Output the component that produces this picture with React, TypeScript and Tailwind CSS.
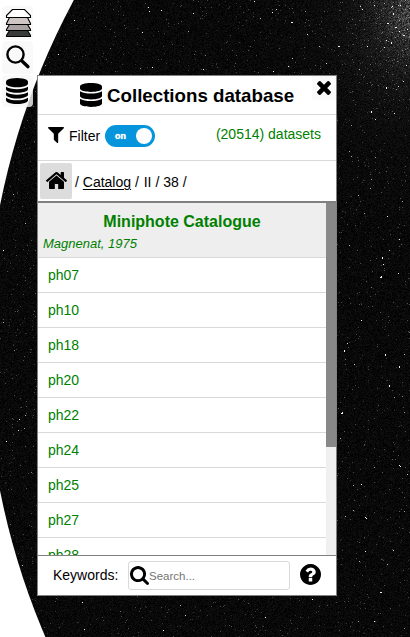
import React, { useLayoutEffect, useRef } from "react";

const rows = ["ph07", "ph10", "ph18", "ph20", "ph22", "ph24", "ph25", "ph27", "ph28"];

const brightStars = [
  [148, 7], [149, 11], [161, 10], [193, 13], [142, 32], [291, 22], [292, 22], [254, 1], [272, 12], [338, 46], [339, 46],
  [367, 46], [386, 40], [391, 42], [391, 43], [403, 35], [404, 35], [387, 23], [388, 23], [395, 27], [396, 27], [374, 5],
  [362, 9], [392, 6], [393, 13], [393, 14], [273, 71], [288, 66], [203, 69], [152, 67], [382, 257], [382, 258], [383, 264],
  [380, 277], [381, 277], [381, 276], [398, 273], [361, 320], [344, 350], [344, 351], [385, 354], [385, 355], [399, 366],
  [399, 367], [389, 385], [389, 386], [342, 412], [341, 413], [342, 413], [399, 465], [400, 466], [361, 484], [365, 517],
  [366, 518], [365, 551], [380, 592], [381, 592], [312, 599], [265, 617], [82, 602], [84, 629], [163, 630], [3, 250],
  [6, 441], [19, 419], [399, 239], [386, 87], [386, 88], [371, 111], [371, 112], [394, 113], [406, 65], [58, 54],
];

const WIDTH = 410;
const HEIGHT = 637;

// Film grain that brightens towards the star cloud in the top right corner.
function paintSky(context: CanvasRenderingContext2D) {
  let state = 12345;
  const next = () => {
    state ^= state << 13;
    state ^= state >>> 17;
    state ^= state << 5;
    return (state >>> 0) / 4294967296;
  };
  const image = context.createImageData(WIDTH, HEIGHT);
  for (let y = 0; y < HEIGHT; y++) {
    for (let x = 0; x < WIDTH; x++) {
      const distance = Math.hypot((WIDTH - x) * 1.15, Math.abs(y - 15) * 0.8);
      const cloud = Math.exp(-distance / 34);
      const noise = next();
      let value = noise * 17 + cloud * (20 + 95 * next());
      const spark = next();
      if (spark < 0.012 + cloud * 0.07) value += 25 + next() * 55;
      if (spark < 0.0007 + cloud * 0.007) value += 70 + next() * 80;
      const i = (y * WIDTH + x) * 4;
      image.data[i] = image.data[i + 1] = image.data[i + 2] = Math.min(255, value);
      image.data[i + 3] = 255;
    }
  }
  context.putImageData(image, 0, 0);
  context.fillStyle = "#f0f0f0";
  brightStars.forEach(([x, y]) => context.fillRect(x, y, 1, 1));
}

function Sky() {
  const canvas = useRef<HTMLCanvasElement>(null);
  useLayoutEffect(() => {
    const context = canvas.current?.getContext("2d");
    if (context) paintSky(context);
  }, []);
  return <canvas ref={canvas} width={WIDTH} height={HEIGHT} className="absolute inset-0 [clip-path:circle(733px_at_719px_348px)]" aria-hidden="true" />;
}

type IconProps = { box: string; d: string; className: string };
function Icon({ box, d, className }: IconProps) {
  return <svg viewBox={box} className={className} fill="currentColor" preserveAspectRatio="none" aria-hidden="true"><path d={d} /></svg>;
}

const databasePath = "M768 768q237 0 443-43t325-127v170q0 69-103 128t-280 93.500-385 34.500-385-34.500-280-93.500-103-128v-170q119 84 325 127t443 43zm0 768q237 0 443-43t325-127v170q0 69-103 128t-280 93.500-385 34.500-385-34.500-280-93.500-103-128v-170q119 84 325 127t443 43zm0-384q237 0 443-43t325-127v170q0 69-103 128t-280 93.500-385 34.500-385-34.500-280-93.500-103-128v-170q119 84 325 127t443 43zm0-1152q208 0 385 34.500t280 93.500 103 128v128q0 69-103 128t-280 93.500-385 34.500-385-34.500-280-93.500-103-128v-128q0-69 103-128t280-93.500 385-34.500z";
const database3Path = "M448 73.143v45.714C448 159.143 347.667 192 224 192S0 159.143 0 118.857V73.143C0 32.857 100.333 0 224 0s224 32.857 224 73.143zM448 176v102.857C448 319.143 347.667 352 224 352S0 319.143 0 278.857V176c48.125 33.143 136.208 48.572 224 48.572S399.874 209.143 448 176zm0 160v102.857C448 479.143 347.667 512 224 512S0 479.143 0 438.857V336c48.125 33.143 136.208 48.572 224 48.572S399.874 369.143 448 336z";
const filterPath = "M1595 295q17 41-14 70l-493 493v742q0 42-39 59-13 5-25 5-27 0-45-19l-256-256q-19-19-19-45v-486l-493-493q-31-29-14-70 17-39 59-39h1280q42 0 59 39z";
const homePath = "M1408 992v480q0 26-19 45t-45 19h-384v-384h-256v384h-384q-26 0-45-19t-19-45v-480q0-1 .5-3t.5-3l575-474 575 474q1 2 1 6zm223-69l-62 74q-8 9-21 11h-3q-13 0-21-7l-692-577-692 577q-12 8-24 7-13-2-21-11l-62-74q-8-10-7-23.500t11-21.500l719-599q32-26 76-26t76 26l244 204v-195q0-14 9-23t23-9h192q14 0 23 9t9 23v408l219 182q10 8 11 21.500t-7 23.500z";
const closePath = "M1490 1322q0 40-28 68l-136 136q-28 28-68 28t-68-28l-294-294-294 294q-28 28-68 28t-68-28l-136-136q-28-28-28-68t28-68l294-294-294-294q-28-28-28-68t28-68l136-136q28-28 68-28t68 28l294 294 294-294q28-28 68-28t68 28l136 136q28 28 28 68t-28 68l-294 294 294 294q28 28 28 68z";
const searchPath = "M1152 704q0-185-131.500-316.500t-316.500-131.500-316.500 131.500-131.500 316.500 131.500 316.500 316.500 131.500 316.500-131.500 131.500-316.500zm512 832q0 52-38 90t-90 38q-54 0-90-38l-343-342q-179 124-399 124-143 0-273.500-55.500t-225-150-150-225-55.500-273.500 55.500-273.500 150-225 225-150 273.500-55.500 273.500 55.500 225 150 150 225 55.500 273.500q0 220-124 399l343 343q37 37 37 90z";
const helpPath = "M1024 1376v-192q0-14-9-23t-23-9h-192q-14 0-23 9t-9 23v192q0 14 9 23t23 9h192q14 0 23-9t9-23zm256-672q0-88-55.500-163t-138.500-116-170-41q-243 0-371 213-15 24 8 42l132 100q7 6 19 6 16 0 25-12 53-68 86-92 34-24 86-24 48 0 85.500 26t37.500 59q0 38-20 61t-68 45q-63 28-115.500 86.500t-52.500 125.500v36q0 14 9 23t23 9h192q14 0 23-9t9-23q0-19 21.500-49.500t54.500-49.500q32-18 49-28.500t46-35 44.500-48 28-60.500 12.500-81zm384 192q0 209-103 385.500t-279.500 279.500-385.500 103-385.500-103-279.500-279.500-103-385.500 103-385.500 279.500-279.500 385.500-103 385.500 103 279.500 279.500 103 385.500z";

function Toolbar() {
  return (
    <nav className="flex w-[31px] shrink-0 flex-col gap-px pt-[6px]">
      <button className="h-[34px] rounded bg-[#f8f8f8]/80">
        <svg width="31" height="34" viewBox="2 6 31 34" stroke="#000" strokeWidth="1.1" aria-hidden="true">
          <path d="M9.500 30.500l-3 5v1h24v-1l-3-5z" fill="#383a3a" />
          <path d="M9.500 24.500l-3 5v1h24v-1l-3-5z" fill="#a9a2a2" />
          <path d="M9.500 17.500l-3 6v1h24v-1l-3-6z" fill="#cfc6c6" />
          <path d="M12.500 9.500l-6 6v2h24v-2l-6-6z" fill="#fff" />
        </svg>
      </button>
      <button className="h-[33px] rounded bg-[#f8f8f8]/80">
        <svg width="31" height="33" viewBox="2 41 31 33" fill="none" stroke="#000" aria-hidden="true">
          <circle cx="15.500" cy="54.500" r="8.100" strokeWidth="2.400" />
          <path d="M22 61l6 5.700" strokeWidth="3.300" strokeLinecap="round" />
        </svg>
      </button>
      <button className="flex h-[32px] items-start rounded bg-[#f8f8f8]/80 pt-[3px] pl-[4px]">
        <Icon box="0 0 1536 1792" d={databasePath} className="h-[26px] w-[22px]" />
      </button>
    </nav>
  );
}

export default function App() {
  return (
    <main className="relative h-[637px] w-[410px] overflow-hidden bg-white font-['Liberation_Sans',Arial,sans-serif] text-sm text-black">
      <Sky />
      <div className="relative flex pl-[2px]">
        <Toolbar />
        <section className="mt-[75px] ml-[4px] flex h-[521px] w-[300px] flex-col border border-[#808080] bg-white">
          <header className="flex h-[39px] shrink-0 border-b border-[#d9d9d9]">
            <div className="flex w-[268px] items-center pl-[42px]">
              <Icon box="0 0 448 512" d={database3Path} className="h-[24px] w-[22px] shrink-0" />
              <h1 className="mt-[2px] ml-[5px] text-[18.720px] font-bold whitespace-nowrap">Collections database</h1>
            </div>
            <button className="ml-[6px] flex h-[24px] w-[24px] items-start bg-[#fafafa] pt-[5px] pl-[5px]">
              <Icon box="302 366 1188 1188" d={closePath} className="size-[14px]" />
            </button>
          </header>
          <div className="flex h-[46px] shrink-0 border-b border-[#d9d9d9] pl-[10px]">
            <Icon box="191 256 1410 1408" d={filterPath} className="mt-[12px] size-[16px]" />
            <span className="mt-[11px] ml-[5px] w-[31px] leading-5">Filter</span>
            <div className="mt-[10px] ml-[5px] flex h-[22px] w-[50px] items-center justify-between rounded-full bg-[#0695dd] pr-[3px] pl-[10px]">
              <span className="text-[9px] leading-none font-bold text-white [text-shadow:0_0_1px_white]">on</span>
              <span className="size-[16px] rounded-full bg-white" />
            </div>
            <span className="mt-[9px] mr-[15px] ml-auto leading-5 text-[#008000]">(20514) datasets</span>
          </div>
          <div className="flex h-[42px] shrink-0 items-start border-b-2 border-[#808080] pt-[2px] pl-[2px]">
            <button className="flex h-[36px] w-[32px] justify-center rounded-[2px] bg-[#dcdcdc] pt-[9px]">
              <Icon box="25 253 1615 1283" d={homePath} className="h-[17px] w-[21px]" />
            </button>
            <span className="mt-[9px] ml-[3px] leading-5 whitespace-pre">/ <u className="underline-offset-2">Catalog</u> / <span className="ml-[1px]">II</span> / 38 /</span>
          </div>
          <div className="flex h-[352px] shrink-0 overflow-hidden">
            <div className="w-[288px]">
              <div className="h-[55px] border-b border-[#d9d9d9] bg-[#eee] text-[#008000]">
                <h2 className="pt-[9px] text-center text-base leading-5 font-bold">Miniphote Catalogue</h2>
                <p className="mt-[2px] pl-[5px] text-[13px] leading-5 italic">Magnenat, 1975</p>
              </div>
              <ul>
                {rows.map((name) => (
                  <li key={name} className="h-[35px] border-b border-[#d9d9d9] pl-[10px] leading-[34px] text-[#008000]">{name}</li>
                ))}
              </ul>
            </div>
            <div className="w-[10px] bg-[#f0f0f0]"><div className="h-[244px] bg-[#888]" /></div>
          </div>
          <footer className="flex h-[40px] shrink-0 border-t border-[#808080] pl-[15px]">
            <label className="mt-[9px] w-[75px] leading-5">Keywords:</label>
            <div className="mt-[5px] flex h-[29px] w-[162px] items-center rounded-[3px] border border-[#d9d9d9] pl-px">
              <Icon box="0 0 1664 1664" d={searchPath} className="size-[19px]" />
              <span className="mt-[2px] text-[11.500px] text-[#757575]">Search...</span>
            </div>
            <Icon box="128 128 1536 1536" d={helpPath} className="mt-[8px] ml-[10px] size-[21px]" />
          </footer>
        </section>
      </div>
    </main>
  );
}
